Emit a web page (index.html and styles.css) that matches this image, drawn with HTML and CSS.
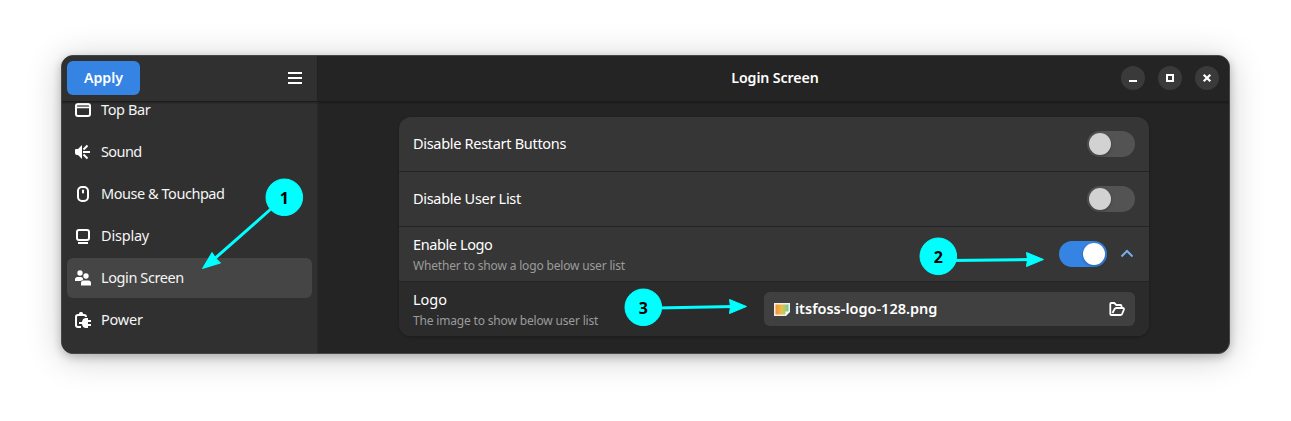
FILE: index.html
```html
<!DOCTYPE html>
<html lang="en">
<head>
<meta charset="utf-8">
<title>Login Screen</title>
<link rel="stylesheet" href="styles.css">
</head>
<body>
<main class="window">
  <aside class="sidebar">
    <header class="side-header">
      <button class="apply"><span>Apply</span></button>
      <svg class="menu" width="16" height="16" viewBox="0 0 16 16"><path d="M1 2h14v2H1zM1 7h14v2H1zM1 12h14v2H1z" fill="#fff"/></svg>
    </header>
    <nav class="nav">
      <a class="item"><svg class="icon" viewBox="0 0 16 16"><path d="M2 3h12v3H2z" fill="#808080"/><rect x="1" y="2" width="14" height="12" rx="2" fill="none" stroke="#fff" stroke-width="2"/><path d="M1 5h14v1.300H1z" fill="#fff"/></svg><span>Top Bar</span></a>
      <a class="item"><svg class="icon" viewBox="0 0 16 16"><path d="M0 6q0-1 1-1h2l4-4v14l-4-4H2Q0 11 0 9z" fill="#fff"/><path d="M8.500 5.500L12.500 1.500M8 8h7M8.500 10.500l4 4" fill="none" stroke="#fff" stroke-width="2"/></svg><span class="t-sound">Sound</span></a>
      <a class="item"><svg class="icon" viewBox="0 0 16 16"><rect x="3" y="1" width="10" height="14" rx="4" fill="none" stroke="#fff" stroke-width="2"/><rect x="7" y="3.500" width="2" height="4" rx="1" fill="#fff"/></svg><span class="t-mouse">Mouse &amp; Touchpad</span></a>
      <a class="item"><svg class="icon" viewBox="0 0 16 16"><rect x="2" y="2" width="12" height="10" rx="2" fill="none" stroke="#fff" stroke-width="2"/><path d="M3 14h10v2H3z" fill="#fff"/></svg><span class="t-display">Display</span></a>
      <a class="item selected"><svg class="icon" viewBox="0 0 16 16"><g fill="#fff"><circle cx="5" cy="3" r="2.700"/><circle cx="11" cy="6" r="2.700"/><path d="M0 11V9.500Q0 7 2.500 7H6q1.500 0 2 1.500Q8.500 10 7 10.500 5.500 10.500 5.300 11zM6 15.500v-2.500Q6 10.500 8.500 10.500h5q2.500 0 2.500 2.500v2.500z"/></g></svg><span class="t-login">Login Screen</span></a>
      <a class="item"><svg class="icon" viewBox="0 0 16 16"><path d="M6 15H3q-2 0-2-2V5q0-2 2-2h6q2 0 2 2" fill="none" stroke="#fff" stroke-width="2"/><path d="M4 3V1.500Q4 0 5.500 0h1Q8 0 8 1.500V3zM4 10h3q.5-4 4-4h2v2h3v2h-3v2h3v2h-3v2h-2q-3.500 0-4-4H4z" fill="#fff"/></svg><span class="t-power">Power</span></a>
    </nav>
  </aside>
  <section class="main">
    <header class="main-header">
      <h1 class="title">Login Screen</h1>
      <div class="controls">
        <span class="control"><svg width="16" height="16"><path d="M4 10h8v2H4z" fill="#fff"/></svg></span>
        <span class="control"><svg width="16" height="16"><path d="M5 5h6v6H5z" fill="none" stroke="#fff" stroke-width="2"/></svg></span>
        <span class="control"><svg width="16" height="16"><path d="M4.700 4.700l6.600 6.600M11.300 4.700l-6.600 6.600" stroke="#fff" stroke-width="2.200"/></svg></span>
      </div>
    </header>
    <div class="card">
      <div class="row"><span class="label t-restart">Disable Restart Buttons</span><span class="switch"><i></i></span></div>
      <div class="row"><span class="label t-users">Disable User List</span><span class="switch"><i></i></span></div>
      <div class="row">
        <div class="copy"><span class="label t-enable">Enable Logo</span><span class="sub">Whether to show a logo below user list</span></div>
        <span class="switch on"><i></i></span>
        <svg class="chevron" width="16" height="16"><path d="M2.500 10.500L8 5l5.500 5.500" fill="none" stroke="#78aeed" stroke-width="2"/></svg>
      </div>
      <div class="row nested">
        <div class="copy"><span class="label t-logo">Logo</span><span class="sub">The image to show below user list</span></div>
        <div class="file">
          <svg width="16" height="16"><defs><linearGradient id="photo"><stop stop-color="#ff862e"/><stop offset=".5" stop-color="#e3c34d"/><stop offset="1" stop-color="#62cfa0"/></linearGradient></defs><path d="M.75 2.750h14.500v8l-3.500 3.500H.75z" fill="url(#photo)" stroke="#f2f0ee" stroke-width="1.500"/><path d="M11.500 14.500V10.500h4z" fill="#fff"/></svg>
          <span class="filename">itsfoss-logo-128.png</span>
          <svg class="folder" width="16" height="16"><path d="M1.300 13V3q0-1 1-1h3l2 2h4.200q1 0 1 1v1.500M1.300 13q0 1 1.200 1h9q1.200 0 1.600-1l1.800-4.500q.3-1.500-1.200-1.500H7.500Q6 7 5.300 8.500L3.500 12" fill="none" stroke="#fff" stroke-width="1.800"/></svg>
        </div>
      </div>
    </div>
  </section>
</main>
<svg class="annotations" width="1291" height="421" viewBox="0 0 1291 421">
  <g fill="none" stroke="#0ff" stroke-width="3">
    <path d="M225 80L160 80.500M272 208L212 261M952 260.500L1030 259.500M656 308L734 306.500"/>
  </g>
  <g fill="#0ff" stroke="#0ff" stroke-linejoin="round">
    <path d="M147.500 80.500l17.500-7-1 7 1 6.500zM202.500 268.500l9.500-16 4 6 4.500 4.500zM1043.500 259.500l-17-7 1 7-1 7zM746.500 306.500l-17-7 1 7-1 7z"/>
    <circle cx="238.300" cy="81.300" r="18.300"/><circle cx="284.300" cy="197.300" r="18.300"/><circle cx="938.300" cy="256.300" r="18.300"/><circle cx="643.300" cy="307.300" r="18.300"/>
  </g>
  <g class="numbers"><text x="238.300" y="87.500">4</text><text x="284.300" y="203.500">1</text><text x="938.300" y="262.500">2</text><text x="643.300" y="313.500">3</text></g>
</svg>
</body>
</html>
```
FILE: styles.css
```css
* { box-sizing: border-box; }
body { margin: 0; padding: 55px 61px 67px; height: 421px; overflow: hidden; background: #fff; color: #fff; font-family: "Noto Sans", sans-serif; font-size: 14.5px; }
.window { display: flex; width: 1169px; height: 299px; overflow: hidden; border-radius: 12px; border: 1px solid #464646; background: #242424; box-shadow: 0 3px 10px rgba(0,0,0,.23), 0 4px 35px rgba(0,0,0,.2); }
.sidebar { width: 256px; flex: none; background: #303030; border-right: 1px solid #292929; }
.side-header, .main-header { position: relative; z-index: 1; height: 46px; display: flex; align-items: center; border-bottom: 1px solid #1c1c1c; box-shadow: 0 1px 2px rgba(0,0,0,.3); }
.side-header { justify-content: space-between; padding: 0 14px 1px 5px; background: #303030; }
.apply { width: 73px; height: 34px; border: 0; border-radius: 6px; background: #3584e4; color: #fff; font: 600 14.2px "Noto Sans", sans-serif; padding: 0 0 1px; }
.nav { margin-top: -12px; padding: 0 5px; display: flex; flex-direction: column; gap: 2px; }
.item { height: 40px; width: 245px; display: flex; align-items: center; gap: 10px; padding-left: 8px; border-radius: 6px; color: #f5f5f5; white-space: nowrap; letter-spacing: -.4px; }
.item span { margin-top: -3px; }
.t-sound { letter-spacing: -.6px; }
.t-mouse { letter-spacing: -.46px; }
.t-display, .t-power { letter-spacing: -.2px; }
.selected { background: #454545; }
.icon { width: 16px; height: 16px; flex: none; }
.main { flex: 1; }
.main-header { padding: 0 10px 1px 111px; background: #242424; }
.title { flex: 1; margin: 0 0 1px; text-align: center; font-size: 14.2px; font-weight: 600; letter-spacing: -.1px; }
.controls { display: flex; gap: 13px; }
.control { width: 24px; height: 24px; border-radius: 50%; display: grid; place-items: center; background: #3a3a3a; }
.card { width: 750px; height: 219px; margin: 15px 0 0 81px; overflow: hidden; border-radius: 12px; background: #363636; box-shadow: 0 1px 3px rgba(0,0,0,.25); }
.row { height: 55px; display: flex; align-items: center; padding: 0 14px; border-bottom: 1px solid #242424; }
.row .label { line-height: 21px; white-space: nowrap; letter-spacing: -.3px; }
.row > .label { margin-top: -2px; }
.row .t-enable { letter-spacing: -.4px; }
.row .t-logo { letter-spacing: 0; }
.row > .label, .copy { flex: 1; }
.copy { display: flex; flex-direction: column; }
.sub { color: #9b9b9b; font-size: 12px; line-height: 20px; white-space: nowrap; letter-spacing: -.17px; padding-top: 1px; margin-bottom: -1px; }
.switch { width: 48px; height: 26px; padding: 2px; border-radius: 13px; background: #535353; }
.switch i { display: block; width: 22px; height: 22px; border-radius: 50%; background: #d2d2d2; box-shadow: 0 1px 3px rgba(0,0,0,.3); }
.on { background: #3584e4; }
.on i { margin-left: 22px; background: #fff; }
.chevron { margin-left: 12px; }
.nested { height: 54px; border: 0; background: #2b2b2b; }
.file { width: 371px; height: 34px; padding: 0 10px; display: flex; align-items: center; gap: 5px; background: #404040; border-radius: 6px; font-weight: 600; font-size: 14.5px; }
.filename { margin-top: -2px; white-space: nowrap; }
.folder { margin-left: auto; }
.annotations { position: absolute; top: 0; left: 0; }
.numbers { fill: #000; font: 700 16px "Noto Sans", sans-serif; text-anchor: middle; }
```
